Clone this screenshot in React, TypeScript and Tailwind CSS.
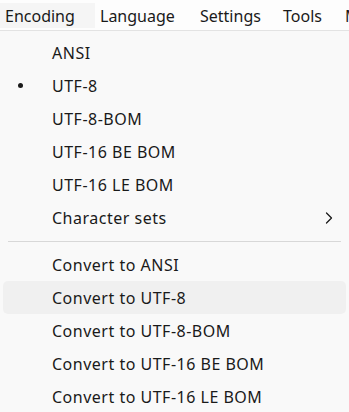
import { ChevronRight } from 'lucide-react';

const topMenu = [
    { label: 'Encoding', width: 'w-[95px]', active: true },
    { label: 'Language', width: 'w-[100px]' },
    { label: 'Settings', width: 'w-[83px]' },
    { label: 'Tools', width: 'w-[62px]' },
    { label: 'Macro', width: 'w-[60px]' },
];

const encodings = ['ANSI', 'UTF-8', 'UTF-8-BOM', 'UTF-16 BE BOM', 'UTF-16 LE BOM'];
const conversions = [
    'Convert to ANSI',
    'Convert to UTF-8',
    'Convert to UTF-8-BOM',
    'Convert to UTF-16 BE BOM',
    'Convert to UTF-16 LE BOM',
];

function MenuRow({ label, checked, hovered, submenu }: { label: string; checked?: boolean; hovered?: boolean; submenu?: boolean }) {
    return (
        <div
            className={`relative flex items-center h-[33px] pl-[49px] pr-[7px] rounded-[5px] ${hovered ? 'bg-[#f0f0f0]' : ''}`}
        >
            {checked && <span className="absolute left-[15px] top-[14px] w-[5px] h-[5px] rounded-full bg-[#1a1a1a]"></span>}
            <span className="flex-1 tracking-[0.5px]">{label}</span>
            {submenu && <ChevronRight size={20} strokeWidth={1.5} className="text-[#1a1a1a]" />}
        </div>
    );
}

export default function App() {
    return (
        <div
            className="w-[349px] h-[412px] overflow-hidden bg-[#f9f9f9] text-[16px] text-[#1a1a1a]"
            style={{ fontFamily: '"Noto Sans", "Open Sans", sans-serif' }}
        >
            {/* Menu bar */}
            <div className="h-[31px] bg-[#fdfdfd] border-b border-[#e3e3e3] pt-[3px] flex whitespace-nowrap overflow-hidden">
                {topMenu.map((item) => (
                    <div
                        key={item.label}
                        className={`h-[25px] flex items-center pl-[5px] shrink-0 ${item.width} ${item.active ? 'bg-[#f5f5f5]' : ''}`}
                    >
                        {item.label}
                    </div>
                ))}
            </div>

            {/* Dropdown */}
            <div className="px-[3px] pt-[5px]">
                {encodings.map((e) => (
                    <MenuRow key={e} label={e} checked={e === 'UTF-8'} />
                ))}
                <MenuRow label="Character sets" submenu />
                <div className="h-[14px] flex items-center px-[5px]">
                    <div className="w-full h-px bg-[#d8d8d8]"></div>
                </div>
                {conversions.map((c) => (
                    <MenuRow key={c} label={c} hovered={c === 'Convert to UTF-8'} />
                ))}
            </div>
        </div>
    );
}
